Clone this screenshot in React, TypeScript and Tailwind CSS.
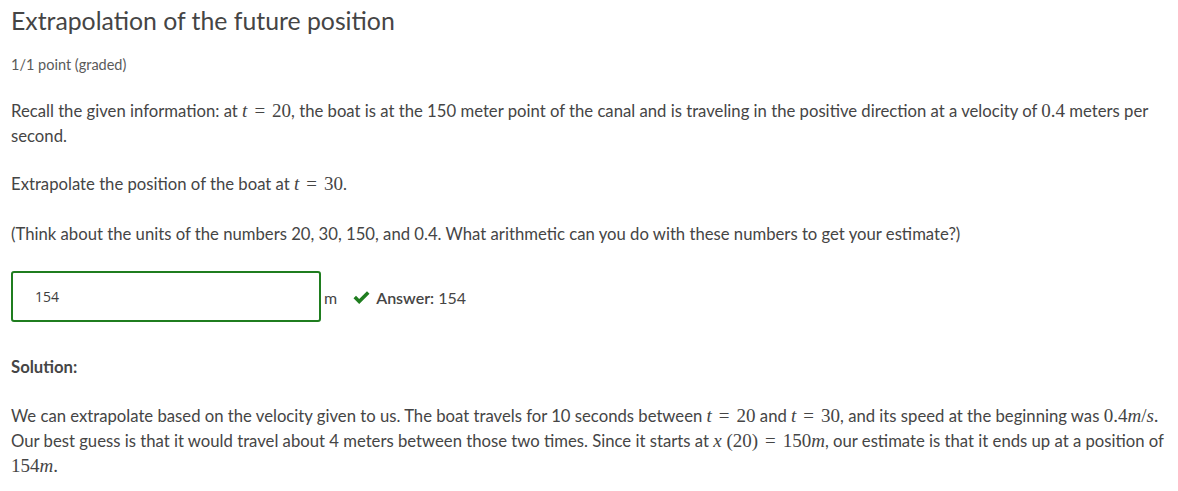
import React from "react";

const M = ({ children }: { children: React.ReactNode }) => (
  <span className="text-[19px] leading-[20px] [font-family:'Liberation_Serif',serif] whitespace-nowrap">{children}</span>
);
const I = ({ children }: { children: React.ReactNode }) => <i className="italic">{children}</i>;
const Eq = () => <span className="mx-[7px]">=</span>;

export default function App() {
  return (
    <div className="w-[1178px] h-[491px] bg-white text-[#454545] [font-family:Lato,sans-serif] overflow-hidden">
      <div className="pl-[11px] pr-[10px] pt-[4px]">
        <h2 className="text-[24.8px] leading-[34px] text-[#454545]">Extrapolation of the future position</h2>
        <div className="mt-[17px] text-[14.5px] leading-[20px] text-[#5a5a5a]">1/1 point (graded)</div>
        <p className="mt-[24px] text-[16.7px] leading-[25px]">
          Recall the given information: at <M><I>t</I><Eq />20</M>, the boat is at the 150 meter point of the canal and is
          traveling in the positive direction at a velocity of <M>0.4</M> meters per second.
        </p>
        <p className="mt-[23px] text-[16.7px] leading-[25px]">
          Extrapolate the position of the boat at <M><I>t</I><Eq />30</M>.
        </p>
        <p className="mt-[25px] text-[16.7px] leading-[25px]">
          (Think about the units of the numbers 20, 30, 150, and 0.4. What arithmetic can you do with these numbers to get
          your estimate?)
        </p>
        <div className="mt-[24px] flex items-center">
          <div className="w-[310px] h-[51px] border-2 border-[#1f7d1f] rounded-[3px] flex items-center pl-[22px] text-[14px] [font-family:'Open_Sans',sans-serif] text-[#3d3d3d]">
            154
          </div>
          <span className="ml-[3px] mt-[2px] text-[16px]">m</span>
          <svg className="ml-[15px] mt-[1px]" width="19" height="15" viewBox="0 0 19 15">
            <path d="M1.5 8.2 L4 5.7 L7.2 8.9 L15 1.2 L17.5 3.7 L7.2 14 Z" fill="#1f7d1f" />
          </svg>
          <span className="ml-[5px] mt-[2px] text-[16px]">
            <span className="font-semibold">Answer:</span> 154
          </span>
        </div>
        <div className="mt-[33px] text-[16.7px] leading-[25px] font-bold">Solution:</div>
        <p className="mt-[24px] text-[16.7px] leading-[25px]">
          We can extrapolate based on the velocity given to us. The boat travels for 10 seconds between{" "}
          <M><I>t</I><Eq />20</M> and <M><I>t</I><Eq />30</M>, and its speed at the beginning was{" "}
          <M>0.4<I>m</I>/<I>s</I>.</M> Our best guess is that it would travel about 4 meters between those two times. Since it
          starts at <M><I>x</I> (20)<Eq />150<I>m</I></M>, our estimate is that it ends up at a position of <M>154<I>m</I>.</M>
        </p>
      </div>
    </div>
  );
}
